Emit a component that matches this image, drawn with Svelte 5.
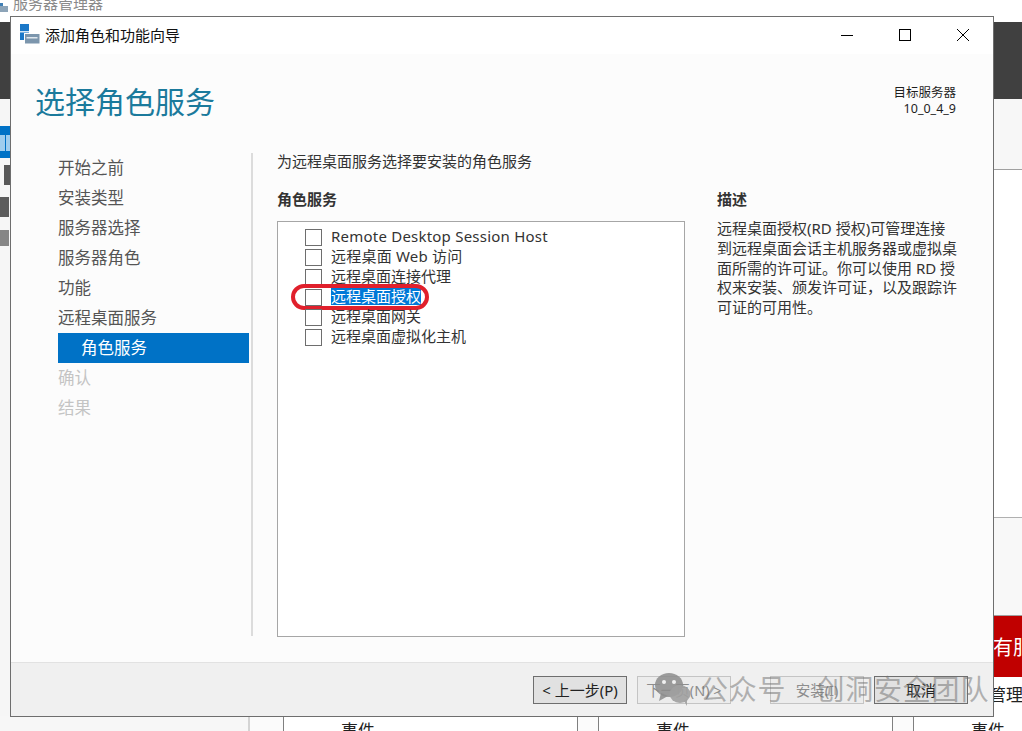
<script>
  const steps = [
    { label: '开始之前' },
    { label: '安装类型' },
    { label: '服务器选择' },
    { label: '服务器角色' },
    { label: '功能' },
    { label: '远程桌面服务' },
    { label: '角色服务', active: true },
    { label: '确认', disabled: true },
    { label: '结果', disabled: true }
  ];
  const roles = [
    { label: 'Remote Desktop Session Host', wide: true },
    { label: '远程桌面 Web 访问', wide: true },
    { label: '远程桌面连接代理' },
    { label: '远程桌面授权', selected: true },
    { label: '远程桌面网关' },
    { label: '远程桌面虚拟化主机' }
  ];
</script>

<div class="desktop">
  <div class="appbar">
    <svg class="appicon" width="8" height="9" viewBox="0 0 8 9"><rect x="0" y="3" width="8" height="6" fill="#8da4b8"/><rect x="0" y="0" width="3" height="3" fill="#3f7fb5"/></svg>
    <span>服务器管理器</span>
  </div>
  <div class="darkband"></div>
  <div class="mgr">
    <div class="rail">
      <div class="rail-active"><i></i><i></i></div>
      <div class="rail-a"></div>
      <div class="rail-b"></div>
      <div class="rail-c"></div>
    </div>
    <div class="mgr-mid"></div>
    <div class="right">
      <div class="right-top"></div>
      <div class="right-white"></div>
      <div class="right-grey"></div>
      <div class="red">有服</div>
      <div class="mgrtext">管理</div>
    </div>
  </div>
  <div class="tablestrip">
    <div class="cell c1"></div>
    <div class="cell c2"></div>
    <div class="cell c3">事件</div>
    <div class="cell c4"></div>
    <div class="cell c3">事件</div>
    <div class="cell c4"></div>
    <div class="cell c6">事件</div>
  </div>

  <section class="wizard">
    <header class="titlebar">
      <svg class="wicon" width="20" height="20" viewBox="0 0 20 20">
        <rect x="0" y="0" width="9" height="16" fill="#1b78c8"/>
        <rect x="0" y="7" width="9" height="1.500" fill="#d8e8f5"/>
        <rect x="4" y="9" width="15.500" height="10.500" fill="#fff"/>
        <rect x="5" y="10" width="14.500" height="9.500" fill="#7c96ad"/>
        <rect x="6.500" y="13" width="11" height="1.500" fill="#dfe7ee"/>
      </svg>
      <span class="wtitle">添加角色和功能向导</span>
      <div class="winbtns">
        <svg width="14" height="14" viewBox="0 0 14 14"><path d="M1 7.500H13" stroke="#000" stroke-width="1"/></svg>
        <svg width="14" height="14" viewBox="0 0 14 14"><rect x="1.500" y="1.500" width="11" height="11" fill="none" stroke="#000" stroke-width="1"/></svg>
        <svg width="14" height="14" viewBox="0 0 14 14"><path d="M1 1L13 13M13 1L1 13" stroke="#000" stroke-width="1"/></svg>
      </div>
    </header>

    <div class="pagehead">
      <h1>选择角色服务</h1>
      <div class="target">
        <div>目标服务器</div>
        <div>10_0_4_9</div>
      </div>
    </div>

    <div class="body">
      <nav class="steps">
        {#each steps as s}
          <div class="step" class:active={s.active} class:disabled={s.disabled}>{s.label}</div>
        {/each}
      </nav>
      <div class="content">
        <p class="lead">为远程桌面服务选择要安装的角色服务</p>
        <div class="cols">
          <div class="rolecol">
            <div class="heading">角色服务</div>
            <div class="listbox">
              {#each roles as r}
                <div class="role">
                  <span class="check"></span>
                  <span class="rolelabel" class:selected={r.selected} class:wide={r.wide}>{r.label}</span>
                  {#if r.selected}<span class="ring"></span>{/if}
                </div>
              {/each}
            </div>
          </div>
          <div class="desccol">
            <div class="heading">描述</div>
            <p class="desc">远程桌面授权(RD 授权)可管理连接到远程桌面会话主机服务器或虚拟桌面所需的许可证。你可以使用 RD 授权来安装、颁发许可证，以及跟踪许可证的可用性。</p>
          </div>
        </div>
      </div>
    </div>

    <footer class="foot">
      <button class="btn">&lt; 上一步(P)</button>
      <button class="btn off">下一页(N) &gt;</button>
      <button class="btn off install">安装(I)</button>
      <button class="btn">取消</button>
    </footer>
  </section>

  <div class="watermark">
    <svg width="36" height="33" viewBox="0 0 36 33">
      <ellipse cx="14" cy="12" rx="14" ry="12" fill="#8c8c8c" fill-opacity=".85"/>
      <path d="M6 20L4 28L13 23Z" fill="#8c8c8c" fill-opacity=".85"/>
      <ellipse cx="25" cy="21" rx="10.500" ry="9" fill="#a0a0a0" fill-opacity=".9"/>
      <path d="M29 28L32 33L32 26Z" fill="#a0a0a0" fill-opacity=".9"/>
      <circle cx="9" cy="9" r="2" fill="#f0f0f0"/>
      <circle cx="19" cy="9" r="2" fill="#f0f0f0"/>
    </svg>
    <span class="wm1">公众号</span>
    <span class="wm2">创洞安全团队</span>
  </div>
</div>

<style>
  :global(body) { margin: 0; background: #fff; }
  .desktop {
    position: relative;
    width: 1022px;
    height: 731px;
    overflow: hidden;
    display: flex;
    flex-direction: column;
    background: #fff;
    font-family: "Noto Sans", "Noto Sans CJK SC", sans-serif;
    color: #1e1e1e;
  }
  .appbar {
    height: 22px;
    flex: none;
    display: flex;
    align-items: flex-start;
    gap: 5px;
    font-size: 15px;
    line-height: 20px;
    color: #8a8a8a;
    overflow: hidden;
  }
  .appbar span { margin-top: -7px; }
  .appicon { margin-top: 3px; flex: none; }
  .darkband { height: 77px; flex: none; background: #404040; }
  .mgr { flex: 1; display: flex; min-height: 0; background: #f6f6f6; }
  .rail { width: 10px; flex: none; padding-top: 27px; display: flex; flex-direction: column; }
  .rail-active { height: 32px; background: #0072c6; padding: 9px 0 7px; box-sizing: border-box; display: flex; gap: 1px; flex: none; }
  .rail-active i { flex: 1; background: #9fcdee; }
  .rail-a { width: 6px; height: 20px; margin: 7px 0 0 4px; background: #585858; flex: none; }
  .rail-b { width: 9px; height: 20px; margin: 12px 0 0 0; background: #5c5c5c; flex: none; }
  .rail-c { width: 9px; height: 16px; margin: 13px 0 0 0; background: #868686; flex: none; }
  .mgr-mid { flex: 1; }
  .right { width: 29px; flex: none; display: flex; flex-direction: column; }
  .right-top { height: 70px; background: #f7f7f7; border-bottom: 1px solid #a0a0a0; flex: none; }
  .right-white { height: 347px; background: #fff; flex: none; border-bottom: 1px solid #b0b0b0; }
  .right-grey { height: 97px; flex: none; background: #f8f8f8; border-bottom: 1px solid #a0a0a0; }
  .red {
    height: 61px; flex: none; background: #c00000; color: #fff;
    font-size: 20px; line-height: 63px; white-space: nowrap; overflow: hidden;
  }
  .mgrtext {
    background: #fff; flex: 1; font-size: 17px; line-height: 24px; white-space: nowrap;
    padding-top: 6px; margin-left: -4px; color: #222;
  }
  .tablestrip {
    height: 15px;
    flex: none;
    display: flex;
    background: #fafafa;
    font-size: 17px;
    line-height: 24px;
    color: #222;
    overflow: hidden;
  }
  .cell { flex: none; box-sizing: border-box; height: 15px; }
  .c1 { width: 250px; background: #f7f7f7; border-right: 2px solid #d4d4d4; }
  .c2 { width: 34px; border-right: 1px solid #808080; background: #fbfbfb; }
  .c3 { width: 294px; border-right: 1px solid #808080; background: #fff; padding: 3px 0 0 57px; }
  .c4 { width: 21px; border-right: 1px solid #808080; background: #fbfbfb; }
  .c6 { flex: 1; background: #fff; padding: 3px 0 0 57px; }

  .wizard {
    position: absolute;
    left: 10px;
    top: 16px;
    width: 982px;
    height: 699px;
    border: 1px solid #6e6e6e;
    background: #fcfcfc;
    display: flex;
    flex-direction: column;
  }
  .titlebar {
    height: 37px;
    flex: none;
    background: #fff;
    display: flex;
    align-items: center;
    padding-left: 9px;
  }
  .wicon { flex: none; margin-top: -3px; }
  .wtitle { margin-left: 5px; font-size: 15px; color: #111; margin-top: -2px; }
  .winbtns { margin-left: auto; display: flex; gap: 44px; padding-right: 23px; margin-top: -2px; }
  .pagehead {
    height: 99px;
    flex: none;
    display: flex;
    justify-content: space-between;
    box-sizing: border-box;
    padding: 0 37px 0 24px;
  }
  h1 {
    margin: 0;
    padding-top: 26px;
    font-size: 30px;
    line-height: 44px;
    font-weight: 400;
    color: #1b7a9c;
  }
  .target {
    padding-top: 31px;
    text-align: right;
    font-size: 12.500px;
    line-height: 16px;
    color: #1e1e1e;
  }
  .body { flex: 1; display: flex; min-height: 0; }
  .steps {
    width: 193px;
    flex: none;
    margin-left: 47px;
    height: 483px;
    border-right: 2px solid #dcdcdc;
  }
  .step {
    height: 30px;
    line-height: 30px;
    font-size: 16.500px;
    color: #555;
    white-space: nowrap;
  }
  .step.active {
    width: 191px;
    padding-left: 23px;
    box-sizing: border-box;
    background: #0072c6;
    color: #fff;
  }
  .step.disabled { color: #c4c4c4; }
  .content { flex: 1; padding-left: 24px; min-width: 0; }
  .lead {
    margin: -2px 0 0;
    font-size: 15px;
    line-height: 20px;
    height: 39px;
    color: #333;
    white-space: nowrap;
  }
  .cols { display: flex; }
  .rolecol { width: 408px; flex: none; }
  .heading { font-size: 15px; font-weight: 700; line-height: 18px; height: 31px; color: #333; }
  .listbox {
    box-sizing: border-box;
    width: 408px;
    height: 416px;
    border: 1px solid #a6a6a6;
    background: #fff;
    padding-top: 5px;
  }
  .role {
    position: relative;
    height: 20px;
    display: flex;
    align-items: center;
    padding-left: 27px;
    font-size: 15px;
    color: #333;
  }
  .check {
    width: 15px;
    height: 15px;
    border: 1px solid #6e6e6e;
    background: #fff;
    flex: none;
    margin-right: 9px;
  }
  .rolelabel { line-height: 18px; white-space: nowrap; margin-top: -2px; }
  .rolelabel.wide { letter-spacing: .22px; }
  .rolelabel.selected { background: #0078d7; color: #fff; }
  .ring {
    position: absolute;
    left: 13px;
    top: -3px;
    width: 138px;
    height: 26px;
    box-sizing: border-box;
    border: 4px solid #e0202c;
    border-radius: 13px;
  }
  .desccol { margin-left: 32px; width: 241px; }
  .desccol .heading { height: 29px; }
  .desc { margin: 0; font-size: 15px; line-height: 19.800px; color: #333; width: 241px; }
  .foot {
    height: 53px;
    flex: none;
    background: #f0f0f0;
    border-top: 1px solid #e2e2e2;
    display: flex;
    align-items: center;
    justify-content: flex-end;
    padding-right: 25px;
    gap: 10px;
  }
  .btn {
    width: 94px;
    height: 28px;
    box-sizing: border-box;
    border: 1px solid #6e6e6e;
    background: #e1e1e1;
    font: 400 15px "Noto Sans", "Noto Sans CJK SC", sans-serif;
    color: #222;
    padding: 0;
    white-space: nowrap;
  }
  .btn.off { border-color: #c4c4c4; background: #ececec; color: #8d8d8d; font-size: 14.500px; }
  .btn.install { margin-left: 29px; }
  .watermark {
    position: absolute;
    left: 655px;
    top: 671px;
    display: flex;
    align-items: center;
    color: rgba(110, 110, 110, .5);
    font-size: 28px;
    line-height: 36px;
    white-space: nowrap;
    letter-spacing: .8px;
  }
  .wm1 { margin-left: 9px; }
  .wm2 { margin-left: 30px; }
</style>
